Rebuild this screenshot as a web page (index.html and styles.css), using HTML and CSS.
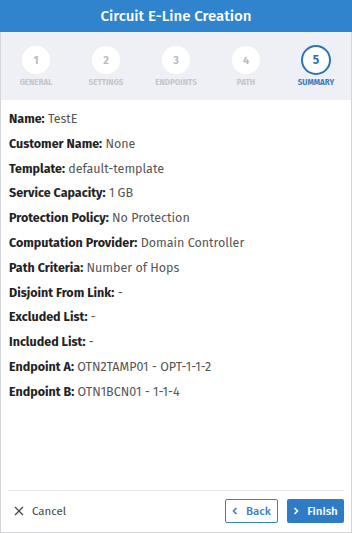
FILE: index.html
```html
<!DOCTYPE html>
<html>
<head>
<meta charset="utf-8">
<link rel="stylesheet" href="styles.css">
</head>
<body>
<div class="dialog">
  <div class="header">Circuit E-Line Creation</div>
  <div class="steps">
    <div class="step"><div class="circle">1</div><div class="label">General</div></div>
    <div class="step"><div class="circle">2</div><div class="label">Settings</div></div>
    <div class="step"><div class="circle">3</div><div class="label">Endpoints</div></div>
    <div class="step"><div class="circle">4</div><div class="label">Path</div></div>
    <div class="step active"><div class="circle">5</div><div class="label">Summary</div></div>
  </div>
  <div class="content">
    <div class="row"><b>Name:</b> TestE</div>
    <div class="row"><b>Customer Name:</b> None</div>
    <div class="row"><b>Template:</b> default-template</div>
    <div class="row"><b>Service Capacity:</b> 1 GB</div>
    <div class="row"><b>Protection Policy:</b> No Protection</div>
    <div class="row"><b>Computation Provider:</b> Domain Controller</div>
    <div class="row"><b>Path Criteria:</b> Number of Hops</div>
    <div class="row"><b>Disjoint From Link:</b> -</div>
    <div class="row"><b>Excluded List:</b> -</div>
    <div class="row"><b>Included List:</b> -</div>
    <div class="row"><b>Endpoint A:</b> OTN2TAMP01 - OPT-1-1-2</div>
    <div class="row"><b>Endpoint B:</b> OTN1BCN01 - 1-1-4</div>
  </div>
  <div class="footer">
    <div class="cancel">
      <svg width="10" height="10" viewBox="0 0 10 10"><path d="M1 1L9 9M9 1L1 9" stroke="#444" stroke-width="1.3" fill="none"/></svg>
      <span>Cancel</span>
    </div>
    <div class="buttons">
      <div class="btn back">
        <svg width="6" height="8" viewBox="0 0 6 8"><path d="M4.5 1L1.5 4L4.5 7" stroke="#3a80c5" stroke-width="1.6" fill="none"/></svg>
        <span>Back</span>
      </div>
      <div class="btn finish">
        <svg width="6" height="8" viewBox="0 0 6 8"><path d="M1.5 1L4.5 4L1.5 7" stroke="#fff" stroke-width="1.6" fill="none"/></svg>
        <span>Finish</span>
      </div>
    </div>
  </div>
</div>
</body>
</html>
```
FILE: styles.css
```css
* { box-sizing: border-box; }
html, body { margin: 0; padding: 0; }
body {
  width: 352px;
  height: 533px;
  font-family: "Fira Sans", "Open Sans", Roboto, sans-serif;
  background: #fff;
}
.dialog {
  width: 352px;
  height: 533px;
  border: 1px solid #d3d6db;
  border-top: none;
  display: flex;
  flex-direction: column;
}
.header {
  height: 32px;
  margin: 0 -1px;
  background: #2f84cd;
  color: #fff;
  font-size: 15px;
  display: flex;
  align-items: center;
  justify-content: center;
  font-weight: 500;
}
.steps {
  height: 68px;
  background: #eef0f5;
  display: flex;
  padding-top: 14px;
}
.step {
  width: 70px;
  display: flex;
  flex-direction: column;
  align-items: center;
}
.circle {
  width: 28px;
  height: 28px;
  border-radius: 50%;
  background: #fff;
  color: #b8bbc2;
  font-size: 11px;
  font-weight: 700;
  display: flex;
  align-items: center;
  justify-content: center;
}
.label {
  margin-top: 4px;
  font-size: 8px;
  font-weight: 700;
  text-transform: uppercase;
  color: #c3c6cc;
}
.step.active .circle {
  width: 30px;
  height: 30px;
  margin-top: -1px;
  border: 2px solid #2d72b8;
  color: #2d72b8;
  font-size: 12px;
}
.step.active .label {
  margin-top: 3px;
  color: #3a7dc0;
}
.content {
  flex: 1;
  padding: 7px 0 0 8px;
  display: flex;
  flex-direction: column;
}
.row {
  height: 24.8px;
  line-height: 24.8px;
  font-size: 12.5px;
  color: #555;
  white-space: nowrap;
}
.row b {
  color: #222;
  font-weight: 700;
}
.footer {
  margin: 0 7px;
  border-top: 1px solid #e6e8eb;
  height: 42px;
  display: flex;
  align-items: center;
  justify-content: space-between;
  padding-bottom: 2px;
}
.cancel {
  display: flex;
  align-items: center;
  gap: 8px;
  padding-left: 6px;
  font-size: 11.5px;
  color: #444;
}
.buttons {
  display: flex;
  gap: 9px;
}
.btn {
  height: 24px;
  display: flex;
  align-items: center;
  justify-content: center;
  gap: 8px;
  font-size: 11.5px;
  font-weight: 500;
  border-radius: 2px;
}
.back {
  width: 53px;
  border: 1px solid #3a80c5;
  color: #3a80c5;
  background: #fff;
}
.finish {
  width: 57px;
  background: #2d7cc5;
  color: #fff;
}
```
